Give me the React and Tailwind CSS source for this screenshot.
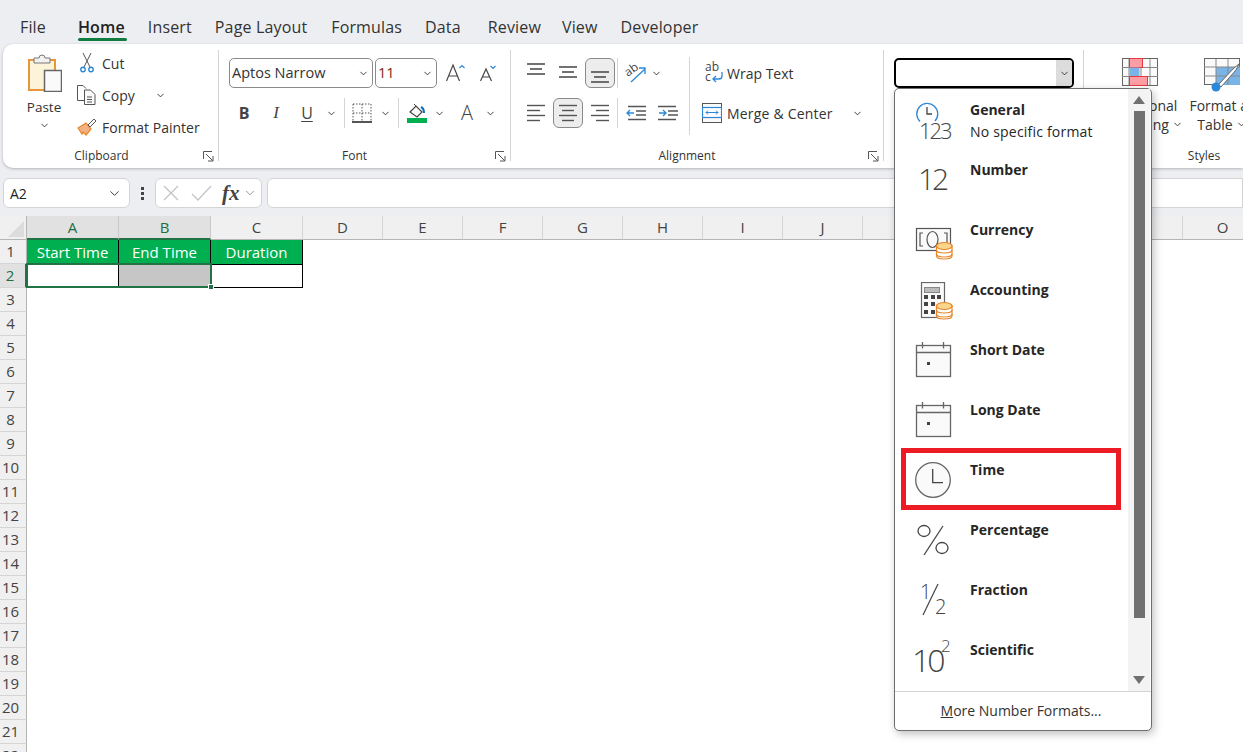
import { ChevronDown } from 'lucide-react'

function Chev({ className = '' }) {
  return <ChevronDown size={11} strokeWidth={2} className={`shrink-0 text-[#333] ${className}`} />
}

function Launcher() {
  return (
    <svg width="11" height="11" viewBox="0 0 11 11" fill="none" stroke="#555" className="shrink-0">
      <path d="M.5 8V.5H9" />
      <path d="M3 3l6.500 6.500M5 10h5V5" />
    </svg>
  )
}

function Group({ label, width, children, launcher = true }) {
  return (
    <div className={`flex flex-col shrink-0 border-r border-[#d4d4d4] mt-[6px] mb-[7px] ${width}`}>
      <div className="flex-1 min-h-0">{children}</div>
      <div className="relative h-[18px] -mb-[4px] pr-[20px] text-[12px] text-[#333] text-center leading-[18px]">
        {label}
        {launcher && <span className="absolute right-[4px] top-[4px]"><Launcher /></span>}
      </div>
    </div>
  )
}

function ClipboardGroup() {
  return (
    <Group label="Clipboard" width="w-[214px]">
      <div className="flex pl-[14px]">
        <div className="w-[50px] flex flex-col items-center pt-[4px]">
          <svg width="34" height="38" viewBox="0 0 34 38" className="mr-[-1px]">
            <rect x="1" y="6" width="26" height="30" fill="#fdf3d8" stroke="#e8963a" strokeWidth="2" />
            <path d="M6 9V4h5a3 3 0 0 1 6 0h5v5z" fill="#f2f2f2" stroke="#777" />
            <rect x="16.500" y="16.500" width="17" height="21" fill="#fafafa" stroke="#666" strokeWidth="1.500" />
          </svg>
          <span className="text-[13.500px] leading-[20px] text-[#333] mt-[5px]">Paste</span>
          <Chev className="mt-[3px]" />
        </div>
        <div className="flex flex-col ml-[8px] -mt-[3px] text-[14px] text-[#333]">
          <div className="h-[32px] flex items-center gap-[5px]">
            <svg width="20" height="20" viewBox="0 0 20 20" fill="none">
              <path d="M6 0l7 14M14 0L7 14" stroke="#555" />
              <circle cx="6" cy="16.500" r="2.200" stroke="#2b88d8" strokeWidth="1.400" />
              <circle cx="14" cy="16.500" r="2.200" stroke="#2b88d8" strokeWidth="1.400" />
            </svg>
            Cut
          </div>
          <div className="h-[32px] flex items-center gap-[5px]">
            <svg width="20" height="20" viewBox="0 0 20 20" fill="none" stroke="#555" className="shrink-0">
              <path d="M7 15.500H.5V.5H6l3 3" />
              <path d="M7.500 5h6l4.500 4.500v10H7.500z" fill="#fafafa" />
              <path d="M10 12h5M10 14.500h5M10 17h5" />
            </svg>
            Copy
            <Chev className="ml-[15px]" />
          </div>
          <div className="h-[32px] flex items-center gap-[5px]">
            <svg width="20" height="20" viewBox="0 0 20 20" fill="none">
              <path d="M1 11l8-5 5 6-5 6-3-3-1 2z" fill="#f4b183" stroke="#e8862a" strokeWidth="1.200" />
              <path d="M11 8l6-6 2 2-6 6z" fill="#fafafa" stroke="#555" />
            </svg>
            Format Painter
          </div>
        </div>
      </div>
    </Group>
  )
}

function Select({ text, width, textColor = 'text-[#333]' }) {
  return (
    <div className={`h-[30px] ${width} bg-white rounded-[5px] border border-[#8a8a8a] flex items-center justify-between pl-[2px] pr-[3px] text-[14.500px] ${textColor}`}>
      <span>{text}</span>
      <Chev />
    </div>
  )
}

function Sep({ h = 'h-[30px]' }) {
  return <div className={`w-px shrink-0 ${h} bg-[#d4d4d4]`} />
}

function FontGroup() {
  return (
    <Group label="Font" width="w-[292px]">
      <div className="pl-[10px] pt-[8px]">
        <div className="flex items-center gap-[2px]">
          <Select text="Aptos Narrow" width="w-[144px]" />
          <Select text="11" width="w-[62px]" textColor="text-[#7a2a10]" />
          <svg width="20" height="20" viewBox="0 0 20 20" fill="none" className="ml-[7px]">
            <path d="M.5 18L7 2l6.500 16M2.500 13h9" stroke="#444" strokeWidth="1.200" />
            <path d="M13.500 5l2.500-2.500L18.500 5" stroke="#2b88d8" strokeWidth="1.200" />
          </svg>
          <svg width="18" height="20" viewBox="0 0 18 20" fill="none" className="ml-[12px]">
            <path d="M.5 18L6 6l5.500 12M2 14h8" stroke="#444" strokeWidth="1.200" />
            <path d="M10.500 3L13 5.500 15.500 3" stroke="#2b88d8" strokeWidth="1.200" />
          </svg>
        </div>
        <div className="flex items-center mt-[10px] h-[30px] text-[#444]">
          <span className="w-[30px] text-center text-[16px] font-bold">B</span>
          <span className="w-[34px] text-center text-[17px] italic font-['Liberation_Serif',serif]">I</span>
          <span className="w-[28px] text-center text-[16px] underline underline-offset-2">U</span>
          <Chev className="ml-[5px]" />
          <span className="w-[7px]" />
          <Sep />
          <svg width="20" height="20" viewBox="0 0 20 20" fill="none" stroke="#555" className="ml-[7px]">
            <path d="M1 1h18M1 1v18M19 1v18M10 1v18M1 10h18" strokeDasharray="1.500 1.500" />
            <path d="M0 19h20" strokeWidth="2" />
          </svg>
          <Chev className="ml-[8px]" />
          <span className="w-[7px]" />
          <Sep />
          <div className="ml-[8px] w-[20px] flex flex-col items-center">
            <svg width="18" height="15" viewBox="0 0 18 15" fill="none">
              <path d="M2 9l6-6 6 6-5 5z" fill="#fafafa" stroke="#444" strokeWidth="1.200" />
              <path d="M6 1l3 3" stroke="#444" />
              <path d="M13 4c2 1 3 3 3 6" stroke="#106ebe" strokeWidth="2" />
            </svg>
            <div className="w-[20px] h-[5px] bg-[#00b050]" />
          </div>
          <Chev className="ml-[7px]" />
          <span className="w-[16px] ml-[14px] text-center text-[20px] font-light text-[#444]">A</span>
          <Chev className="ml-[10px]" />
        </div>
      </div>
    </Group>
  )
}

function Lines({ kind = 'left', active = false }) {
  const rows = kind === 'left' ? [[0, 18], [0, 13], [0, 18], [0, 13]]
    : kind === 'center' ? [[0, 18], [3, 12], [0, 18], [3, 12]]
    : [[0, 18], [5, 13], [0, 18], [5, 13]]
  return (
    <div className={`w-[30px] h-[30px] flex items-center justify-center rounded-[6px] ${active ? 'bg-[#ededed] border border-[#8a8a8a]' : ''}`}>
      <svg width="18" height="18" viewBox="0 0 18 18" stroke="#555" strokeWidth="1.400">
        {rows.map((r, i) => <path key={i} d={`M${r[0]} ${i * 5 + 1.500}h${r[1]}`} />)}
      </svg>
    </div>
  )
}

function VAlign({ className }) {
  return (
    <div className={`w-[30px] h-[30px] flex justify-center rounded-[6px] ${className}`}>
      <svg width="18" height="13" viewBox="0 0 18 13" stroke="#444" strokeWidth="1.300">
        <path d="M0 1h18M3 6h12M0 11h18" />
      </svg>
    </div>
  )
}

function AlignmentGroup() {
  return (
    <Group label="Alignment" width="w-[373px]">
      <div className="flex pl-[10px] pt-[8px]">
        <div className="w-[168px] shrink-0">
          <div className="flex items-center h-[30px]">
            <div className="w-[32px]"><VAlign className="items-start pt-[5px]" /></div>
            <div className="w-[32px]"><VAlign className="items-start pt-[8px]" /></div>
            <div className="w-[32px]"><VAlign className="bg-[#ededed] border border-[#8a8a8a] items-end pb-[3px]" /></div>
            <Sep />
            <svg width="22" height="24" viewBox="0 0 22 24" fill="none" className="ml-[7px] overflow-visible">
              <text x="0" y="13" fontSize="12" fill="#444" transform="rotate(-35 6 10)">ab</text>
              <path d="M6 21L20 8M14 7h6v6" stroke="#2b88d8" strokeWidth="1.300" />
            </svg>
            <Chev className="ml-[4px]" />
          </div>
          <div className="flex items-center h-[30px] mt-[10px]">
            <div className="w-[32px]"><Lines kind="left" /></div>
            <div className="w-[32px]"><Lines kind="center" active /></div>
            <div className="w-[32px]"><Lines kind="right" /></div>
            <Sep />
            <svg width="20" height="16" viewBox="0 0 20 16" fill="none" className="ml-[8px]">
              <path d="M2 1.500h18M10 6h10M10 10h10M2 14.500h18" stroke="#555" strokeWidth="1.300" />
              <path d="M8 8H1M4 5L1 8l3 3" stroke="#2b88d8" strokeWidth="1.300" />
            </svg>
            <svg width="20" height="16" viewBox="0 0 20 16" fill="none" className="ml-[12px]">
              <path d="M0 1.500h18M10 6h10M10 10h10M0 14.500h18" stroke="#555" strokeWidth="1.300" />
              <path d="M1 8h7M5 5l3 3-3 3" stroke="#2b88d8" strokeWidth="1.300" />
            </svg>
          </div>
        </div>
        <div className="-mt-[1px]"><Sep h="h-[78px]" /></div>
        <div className="pl-[12px] text-[14px] text-[#333]">
          <div className="flex items-center h-[30px] gap-[2px]">
            <svg width="20" height="20" viewBox="0 0 20 20" fill="none" className="ml-[3px] overflow-visible">
              <text x="0" y="8" fontSize="12" fill="#444">ab</text>
              <text x="0" y="18" fontSize="12" fill="#444">c</text>
              <path d="M17 9v4a3 3 0 0 1-3 3H8M11 13l-3 3 3 3" stroke="#2b88d8" strokeWidth="1.300" />
            </svg>
            Wrap Text
          </div>
          <div className="flex items-center h-[30px] mt-[10px] gap-[5px]">
            <svg width="20" height="20" viewBox="0 0 20 20" fill="none">
              <rect x=".5" y=".5" width="19" height="19" fill="#fafafa" stroke="#555" />
              <rect x=".5" y="4.500" width="19" height="10" fill="#fff" stroke="#2b88d8" strokeWidth="1.200" />
              <path d="M4 9.500h12M6 7.500l-2 2 2 2M14 7.500l2 2-2 2" stroke="#2b88d8" />
            </svg>
            <span className="tracking-[0.2px]">Merge &amp; Center</span>
            <Chev className="ml-[14px]" />
          </div>
        </div>
      </div>
    </Group>
  )
}

function NumberGroup() {
  return (
    <Group label="Number" width="w-[200px]">
      <div className="pl-[10px] pt-[8px]">
        <div className="w-[180px] h-[30px] bg-white border-2 border-black rounded-[5px] flex justify-end overflow-hidden">
          <div className="w-[16px] bg-[#dcdcdc] flex items-center justify-center"><Chev /></div>
        </div>
      </div>
    </Group>
  )
}

function StylesGroup() {
  return (
    <Group label="Styles" width="w-[261px]" launcher={false}>
      <div className="flex pl-[12px] pt-[8px] text-[14px] text-[#333] leading-[19px] text-center">
        <div className="w-[88px] shrink-0 flex flex-col items-center">
          <div className="h-[34px]">
            <svg width="36" height="28" viewBox="0 0 36 28" fill="none">
              <rect x=".5" y=".5" width="35" height="27" fill="#fafafa" stroke="#666" />
              <path d="M7 1v26M0 9.500h36M0 18.500h36M19 1v26M28 1v26" stroke="#888" />
              <rect x="7.500" y=".5" width="13" height="9" fill="#ff9da5" stroke="#e8373f" />
              <rect x="7.500" y="9.500" width="10" height="9" fill="#7ab4e6" />
              <rect x="7.500" y="18.500" width="18" height="9" fill="#ff9da5" stroke="#e8373f" />
            </svg>
          </div>
          <div className="mt-[4px] whitespace-nowrap">Conditional</div>
          <div className="flex items-center gap-[3px] whitespace-nowrap">Formatting <Chev /></div>
        </div>
        <div className="w-[64px] ml-[6px] shrink-0 flex flex-col items-center">
          <div className="h-[34px]">
            <svg width="37" height="34" viewBox="0 0 37 34" fill="none">
              <rect x=".5" y=".5" width="35" height="26" fill="#fafafa" stroke="#666" />
              <rect x="12" y="9" width="24" height="18" fill="#7ab4e6" />
              <path d="M12 1v26M24 1v26M0 9h36M0 18h36" stroke="#888" />
              <path d="M14 27l16-17 5-4-3 6-15 17z" fill="#fff" stroke="#666" />
              <circle cx="12" cy="29" r="4.500" fill="#2b88d8" />
            </svg>
          </div>
          <div className="mt-[4px] whitespace-nowrap">Format as</div>
          <div className="flex items-center gap-[3px] whitespace-nowrap">Table <Chev /></div>
        </div>
      </div>
    </Group>
  )
}

function Ribbon() {
  return (
    <div className="ml-[3px] h-[124px] bg-white rounded-l-[10px] shadow-[0_1px_3px_rgba(0,0,0,0.25)] flex pl-[2px] shrink-0">
      <ClipboardGroup />
      <FontGroup />
      <AlignmentGroup />
      <NumberGroup />
      <StylesGroup />
    </div>
  )
}

function FormulaBar() {
  return (
    <div className="flex items-center h-[30px] mt-[10px] pl-[3px] shrink-0">
      <div className="w-[127px] h-[30px] bg-white rounded-[6px] border border-[#d4d4d4] flex items-center justify-between pl-[6px] pr-[7px] text-[14px] text-[#222]">
        A2
        <ChevronDown size={15} strokeWidth={1.500} className="text-[#333]" />
      </div>
      <div className="w-[25px] flex flex-col items-center gap-[2px]">
        <span className="w-[3px] h-[3px] bg-[#444]" />
        <span className="w-[3px] h-[3px] bg-[#444]" />
        <span className="w-[3px] h-[3px] bg-[#444]" />
      </div>
      <div className="w-[107px] h-[30px] bg-white rounded-[6px] border border-[#d4d4d4] flex items-center pl-[7px]">
        <svg width="16" height="16" viewBox="0 0 16 16" stroke="#c4c4c4" strokeWidth="1.300" fill="none">
          <path d="M1 1l14 14M15 1L1 15" />
        </svg>
        <svg width="21" height="16" viewBox="0 0 21 16" stroke="#c4c4c4" strokeWidth="1.300" fill="none" className="ml-[12px]">
          <path d="M1 9l6 6L20 1" />
        </svg>
        <span className="ml-[10px] text-[21px] italic font-semibold text-[#444] leading-none font-['Liberation_Serif',serif]">fx</span>
        <ChevronDown size={14} strokeWidth={1.500} className="text-[#888] ml-[3px]" />
      </div>
      <div className="flex-1 h-[30px] ml-[5px] bg-white rounded-l-[6px] border border-[#d4d4d4]" />
    </div>
  )
}

const cols = ['D', 'E', 'F', 'G', 'H', 'I', 'J', 'K', 'L', 'M', 'N', 'O']
const rows = Array.from({ length: 22 }, (_, i) => i + 1)

function Sheet() {
  return (
    <div className="mt-[8px] bg-white flex-1 min-h-0 overflow-hidden text-[15px]">
      <div className="flex h-[24px] text-[#444] leading-[23px]">
        <div className="w-[27px] shrink-0 bg-[#f0f0f0] border-r border-b border-[#b5b5b5] relative overflow-hidden">
          <div className="absolute right-[2px] bottom-[2px] w-0 h-0 border-l-[16px] border-l-transparent border-b-[16px] border-b-[#dcdcdc]" />
        </div>
        <div className="w-[92px] shrink-0 bg-[#e1e1e1] text-[#1f6e43] text-center border-r border-b-2 border-r-[#c8c8c8] border-b-[#217346]">A</div>
        <div className="w-[92px] shrink-0 bg-[#e1e1e1] text-[#1f6e43] text-center border-r border-b-2 border-r-[#c8c8c8] border-b-[#217346]">B</div>
        <div className="w-[92px] shrink-0 bg-[#f0f0f0] text-center border-r border-b border-r-[#d5d5d5] border-b-[#b5b5b5]">C</div>
        {cols.map(c => (
          <div key={c} className="w-[80px] shrink-0 bg-[#f0f0f0] text-center border-r border-b border-r-[#d5d5d5] border-b-[#b5b5b5]">{c}</div>
        ))}
      </div>
      <div className="flex">
        <div className="w-[27px] shrink-0">
          {rows.map(r => (
            <div
              key={r}
              className={`h-[24px] leading-[23px] text-center pr-[5px] border-b border-b-[#d5d5d5] ${r === 2 ? 'text-[#1f6e43] bg-[#e1e1e1] border-r-2 border-r-[#217346]' : 'text-[#444] bg-[#f0f0f0] border-r border-r-[#b5b5b5]'}`}
            >
              {r}
            </div>
          ))}
        </div>
        <div className="relative">
          <div className="flex h-[24px] bg-[#00b050] text-white text-center leading-[24px] text-[15px]">
            <div className="w-[92px] border-r border-black">Start Time</div>
            <div className="w-[92px] border-r border-black">End Time</div>
            <div className="w-[92px] border-r border-black">Duration</div>
          </div>
          <div className="flex h-[24px] border-t border-b border-black">
            <div className="w-[92px] border-r border-black" />
            <div className="w-[92px] border-r border-white bg-[#c6c6c6]" />
            <div className="w-[92px] border-r border-black" />
          </div>
          {/* selection around A2:B2 */}
          <div className="absolute left-[-1px] top-[23px] w-[186px] h-[25px] border-2 border-[#217346] pointer-events-none">
            <div className="absolute right-[-4px] bottom-[-4px] w-[6px] h-[6px] bg-[#217346] border border-white" />
          </div>
        </div>
      </div>
    </div>
  )
}

function Coins({ x, y }) {
  return (
    <g transform={`translate(${x} ${y})`} stroke="#e8862a" strokeWidth="1.200">
      <path d="M.5 3v11c0 2 3 3 7.500 3s8-1 8-3V3" fill="#fff" />
      <path d="M.5 8c0 2 3 3 7.500 3s8-1 8-3M.5 12c0 2 3 3 7.500 3s8-1 8-3" fill="none" />
      <ellipse cx="8.250" cy="4" rx="7.750" ry="3.500" fill="#fbd58c" />
    </g>
  )
}

function CalendarIcon() {
  return (
    <svg width="38" height="36" viewBox="0 0 38 36" fill="none">
      <rect x="2.500" y="3.500" width="34" height="31" fill="#fafafa" stroke="#666" strokeWidth="1.300" />
      <path d="M2 10.500h35M8.500 0v6.500M29.500 0v6.500" stroke="#666" strokeWidth="1.300" />
      <rect x="13" y="20" width="3" height="3" fill="#444" />
    </svg>
  )
}

const numText = 'text-[#444] font-light leading-none'

const formats = [
  {
    name: 'General', sub: 'No specific format', icon: (
      <div className="relative w-[38px] h-[38px]">
        <svg width="26" height="24" viewBox="0 0 26 24" fill="none" className="absolute left-0 top-0">
          <path d="M6 19.500A10.500 10.500 0 1 1 21 19" stroke="#2b88d8" strokeWidth="1.300" />
          <path d="M13 5v7h5" stroke="#444" strokeWidth="1.300" />
        </svg>
        <span className={`absolute left-[5px] top-[17px] text-[22px] tracking-[-2px] ${numText}`}>123</span>
      </div>
    ),
  },
  { name: 'Number', icon: <span className={`ml-[4px] mt-[2px] text-[30px] tracking-[-3px] ${numText}`}>12</span> },
  {
    name: 'Currency', icon: (
      <svg width="40" height="38" viewBox="0 0 40 38" fill="none">
        <rect x="2.500" y="6.500" width="34" height="22" fill="#fafafa" stroke="#555" strokeWidth="1.200" />
        <path d="M9 11H6v13h3M30 11h3v13h-3" stroke="#555" strokeWidth="1.200" />
        <ellipse cx="18.500" cy="17.500" rx="5.500" ry="8" stroke="#555" strokeWidth="1.200" />
        <Coins x={22} y={20} />
      </svg>
    ),
  },
  {
    name: 'Accounting', icon: (
      <svg width="40" height="38" viewBox="0 0 40 38" fill="none">
        <rect x="7.500" y=".5" width="23" height="35" fill="#fafafa" stroke="#666" strokeWidth="1.200" />
        <rect x="10.500" y="5.500" width="15" height="5" fill="#bbb" stroke="#888" />
        <path d="M10 13h4v4h-4zM17 13h4v4h-4zM23 13h4v4h-4zM10 20h4v4h-4zM17 20h4v4h-4zM10 28h4v4h-4zM17 28h4v4h-4z" fill="#444" />
        <Coins x={22} y={20} />
      </svg>
    ),
  },
  { name: 'Short Date', icon: <CalendarIcon /> },
  { name: 'Long Date', icon: <CalendarIcon /> },
  {
    name: 'Time', icon: (
      <svg width="38" height="36" viewBox="0 0 38 36" fill="none">
        <circle cx="19" cy="18" r="17.300" fill="#fafafa" stroke="#666" strokeWidth="1.300" />
        <path d="M18.700 7v13.700H29" stroke="#444" strokeWidth="1.300" />
      </svg>
    ),
  },
  {
    name: 'Percentage', icon: (
      <svg width="36" height="36" viewBox="0 0 36 36" fill="none" stroke="#444" strokeWidth="1.300">
        <ellipse cx="10" cy="9" rx="6" ry="5.500" />
        <ellipse cx="28" cy="26" rx="6" ry="5.500" />
        <path d="M29 4L10 33" />
      </svg>
    ),
  },
  {
    name: 'Fraction', icon: (
      <div className="relative w-[36px] h-[34px]">
        <span className={`absolute left-[6px] top-0 text-[20px] ${numText}`}>1</span>
        <svg width="36" height="34" viewBox="0 0 36 34" stroke="#444" strokeWidth="1.200" className="absolute left-0 top-0"><path d="M24 2L9 33" /></svg>
        <span className={`absolute left-[21px] top-[15px] text-[20px] ${numText}`}>2</span>
      </div>
    ),
  },
  {
    name: 'Scientific', icon: (
      <div className="relative w-[38px] h-[34px]">
        <span className={`absolute left-[-2px] top-[2px] text-[32px] tracking-[-3px] ${numText}`}>10</span>
        <span className={`absolute left-[27px] top-[-5px] text-[17px] ${numText}`}>2</span>
      </div>
    ),
  },
]

function FormatMenu() {
  return (
    <div className="absolute left-[894px] top-[88px] w-[258px] h-[643px] bg-white border border-[#6e6e6e] rounded-[5px] shadow-[2px_3px_8px_rgba(0,0,0,0.25)] flex flex-col text-[#262626]">
      <div className="flex flex-1 min-h-0">
        <div className="flex-1 pt-[2px] pl-[2px] overflow-hidden">
          {formats.map(f => (
            <div key={f.name} className="h-[60px] flex">
              <div className="w-[73px] pl-[17px] pt-[11px] flex justify-start items-start shrink-0">{f.icon}</div>
              <div className="pt-[8px] text-[14px] leading-[22px]">
                <div className="font-bold">{f.name}</div>
                {f.sub && <div className="tracking-[0.2px]">{f.sub}</div>}
              </div>
            </div>
          ))}
        </div>
        <div className="w-[22px] bg-[#f3f3f3] flex flex-col items-center shrink-0 mr-[1px]">
          <div className="h-[22px] flex items-center"><div className="w-0 h-0 border-x-[6px] border-x-transparent border-b-[8px] border-b-[#707070]" /></div>
          <div className="w-[11px] h-[507px] bg-[#707070]" />
          <div className="flex-1" />
          <div className="h-[22px] flex items-center"><div className="w-0 h-0 border-x-[6px] border-x-transparent border-t-[8px] border-t-[#707070]" /></div>
        </div>
      </div>
      <div className="h-[39px] border-t border-[#d4d4d4] text-center text-[14px] leading-[38px] pr-[4px] shrink-0 text-[#333]">
        <span className="underline">M</span>ore Number Formats...
      </div>
      {/* red callout round the Time row */}
      <div className="absolute left-[6px] top-[359px] w-[220px] h-[62px] border-[5px] border-[#ed1c24] pointer-events-none" />
    </div>
  )
}

export default function App() {
  return (
    <div className="relative w-[1243px] h-[752px] overflow-hidden bg-[#eceef2] flex flex-col font-['Open_Sans',sans-serif]">
      <nav className="h-[44px] shrink-0 flex pl-[20px] pt-[16px] gap-[23px] text-[16px] tracking-[0.15px] text-[#333] leading-[22px]">
        <span className="mr-[9px]">File</span>
        <span className="relative font-semibold text-[#222]">
          Home
          <span className="absolute left-0 right-[-2px] top-[22px] h-[3px] bg-[#107c41] rounded-full" />
        </span>
        <span>Insert</span>
        <span>Page Layout</span>
        <span className="ml-[1px]">Formulas</span>
        <span className="mr-[4px]">Data</span>
        <span>Review</span>
        <span className="-ml-[2px]">View</span>
        <span>Developer</span>
      </nav>
      <Ribbon />
      <FormulaBar />
      <Sheet />
      <FormatMenu />
    </div>
  )
}
